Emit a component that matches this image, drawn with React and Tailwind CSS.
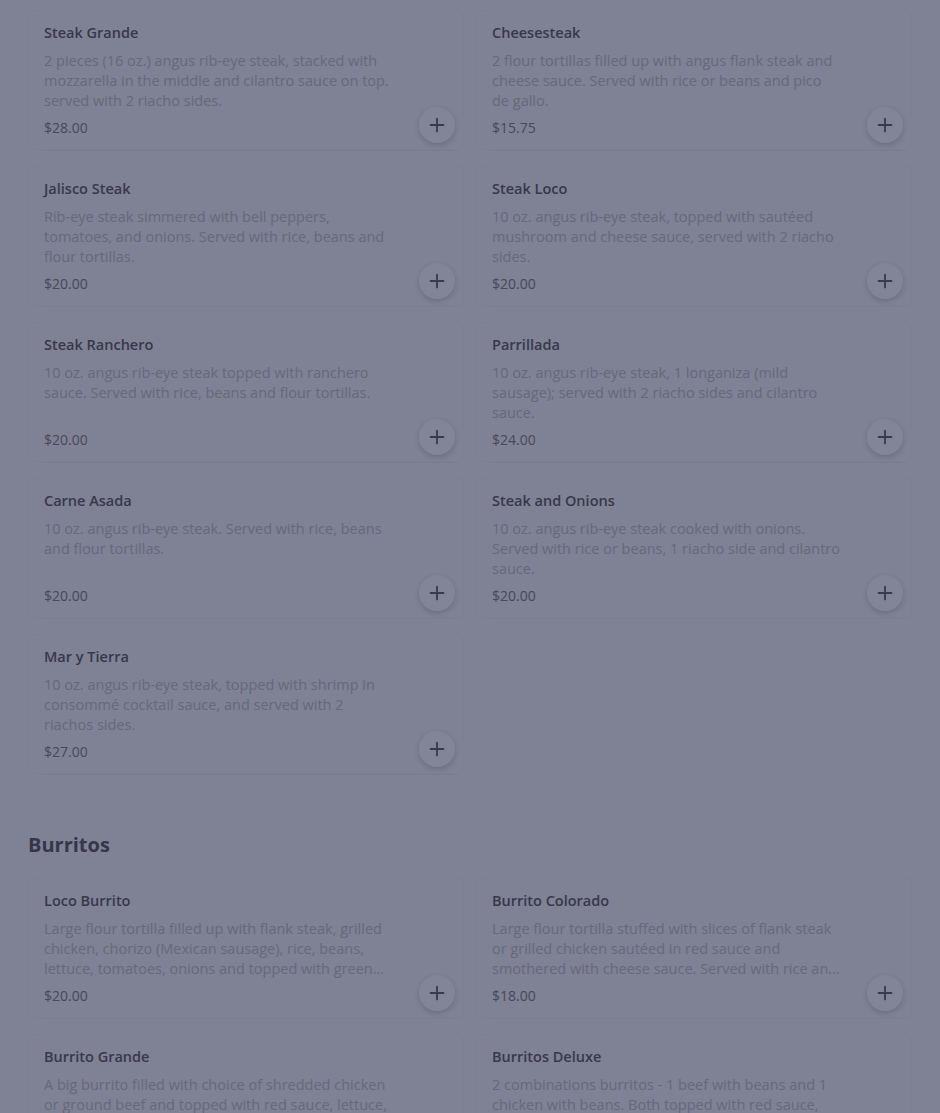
import React from 'react';
import { Plus } from 'lucide-react';

const steaks = [
  { name: 'Steak Grande', desc: '2 pieces (16 oz.) angus rib-eye steak, stacked with mozzarella in the middle and cilantro sauce on top. served with 2 riacho sides.', price: '$28.00' },
  { name: 'Cheesesteak', desc: '2 flour tortillas filled up with angus flank steak and cheese sauce. Served with rice or beans and pico de gallo.', price: '$15.75' },
  { name: 'Jalisco Steak', desc: 'Rib-eye steak simmered with bell peppers, tomatoes, and onions. Served with rice, beans and flour tortillas.', price: '$20.00' },
  { name: 'Steak Loco', desc: '10 oz. angus rib-eye steak, topped with sautéed mushroom and cheese sauce, served with 2 riacho sides.', price: '$20.00' },
  { name: 'Steak Ranchero', desc: '10 oz. angus rib-eye steak topped with ranchero sauce. Served with rice, beans and flour tortillas.', price: '$20.00' },
  { name: 'Parrillada', desc: '10 oz. angus rib-eye steak, 1 longaniza (mild sausage); served with 2 riacho sides and cilantro sauce.', price: '$24.00' },
  { name: 'Carne Asada', desc: '10 oz. angus rib-eye steak. Served with rice, beans and flour tortillas.', price: '$20.00' },
  { name: 'Steak and Onions', desc: '10 oz. angus rib-eye steak cooked with onions. Served with rice or beans, 1 riacho side and cilantro sauce.', price: '$20.00' },
  { name: 'Mar y Tierra', desc: '10 oz. angus rib-eye steak, topped with shrimp in consommé cocktail sauce, and served with 2 riachos sides.', price: '$27.00' },
];

const burritos = [
  { name: 'Loco Burrito', desc: 'Large flour tortilla filled up with flank steak, grilled chicken, chorizo (Mexican sausage), rice, beans, lettuce, tomatoes, onions and topped with green sauce and cheese sauce.', price: '$20.00' },
  { name: 'Burrito Colorado', desc: 'Large flour tortilla stuffed with slices of flank steak or grilled chicken sautéed in red sauce and smothered with cheese sauce. Served with rice and beans.', price: '$18.00' },
  { name: 'Burrito Grande', desc: 'A big burrito filled with choice of shredded chicken or ground beef and topped with red sauce, lettuce, tomatoes and sour cream.', price: '$16.00' },
  { name: 'Burritos Deluxe', desc: '2 combinations burritos - 1 beef with beans and 1 chicken with beans. Both topped with red sauce, lettuce and sour cream.', price: '$17.00' },
];

const ItemCard = ({ item }) => (
  <div className="relative h-[140px] rounded-md border border-[#7d7f92] px-[15px] pt-[12px] pb-[11px] flex flex-col">
    <h3 className="shrink-0 text-[14.5px] leading-5 font-semibold text-[#37384b]">{item.name}</h3>
    <div className="mt-2 flex-1 min-h-0">
      <p className="w-[350px] text-[14.5px] leading-5 text-[#66687b] line-clamp-3">{item.desc}</p>
    </div>
    <div className="shrink-0 text-[14px] leading-5 text-[#47485b]">{item.price}</div>
    <div className="absolute left-3 right-2 bottom-[-2px] h-px bg-[#7a7c8f]" />
    <button className="absolute right-2 bottom-[6px] w-9 h-9 rounded-full bg-[#828497] shadow-[0_2px_5px_rgba(40,42,60,0.22)] flex items-center justify-center text-[#393a4d]">
      <Plus size={22} strokeWidth={2} />
    </button>
  </div>
);

export default function App() {
  return (
    <div className="min-h-[1113px] bg-[#7f8194] px-7 pt-[10px] font-['Open_Sans','Noto_Sans',sans-serif] overflow-hidden">
      <div className="grid grid-cols-2 gap-x-3 gap-y-4">
        {steaks.map(s => <ItemCard key={s.name} item={s} />)}
      </div>
      <h2 className="mt-[57px] mb-[19px] text-[20px] leading-7 font-bold text-[#35364a]">Burritos</h2>
      <div className="grid grid-cols-2 gap-x-3 gap-y-4">
        {burritos.map(s => <ItemCard key={s.name} item={s} />)}
      </div>
    </div>
  );
}
